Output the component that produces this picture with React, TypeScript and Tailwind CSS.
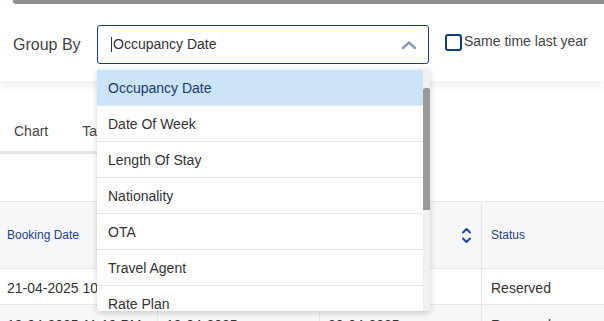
import React from "react";

const font = { fontFamily: '"Liberation Sans", Arial, sans-serif' };

function SortIcon() {
  return (
    <svg width="9" height="17" viewBox="0 0 9 17" fill="none" stroke="#1c4aa0" strokeWidth="2" strokeLinecap="round" strokeLinejoin="round">
      <polyline points="1,5.5 4.5,2 8,5.5" />
      <polyline points="1,11.5 4.5,15 8,11.5" />
    </svg>
  );
}

const items = [
  "Occupancy Date",
  "Date Of Week",
  "Length Of Stay",
  "Nationality",
  "OTA",
  "Travel Agent",
  "Rate Plan",
  "Room Type",
];

export default function App() {
  return (
    <div className="relative w-[604px] h-[321px] overflow-hidden bg-white text-[#333]" style={font}>
      {/* top bar */}
      <div className="ml-[13px] h-[4px] bg-[#8f8f8f] rounded-bl-[3px]" />

      {/* filter panel */}
      <div className="relative z-10 h-[77px] bg-white shadow-[0_5px_10px_rgba(0,0,0,0.06)] flex items-start pt-[21px] pl-[13px]">
        <div className="w-[84px] h-[39px] flex items-center text-[16px] text-[#444]">Group By</div>
        <div className="w-[332px] h-[39px] border border-[#1b3f7a] rounded-[3px] flex items-center pl-[13px] pr-[11px]">
          <span className="w-px h-[15px] bg-[#333] mr-[1px]" />
          <span className="text-[14px] text-[#333] flex-1">Occupancy Date</span>
          <svg width="16" height="10" viewBox="0 0 16 10" fill="none" stroke="#8b9bb0" strokeWidth="2.4" strokeLinecap="round" strokeLinejoin="round">
            <polyline points="2,8 8,2.5 14,8" />
          </svg>
        </div>
        <div className="ml-[16px] mt-[9px] flex items-start">
          <span className="w-[17px] h-[17px] border-2 border-[#0e3c82] rounded-[3px]" />
          <span className="ml-[2px] text-[14px] leading-[15px] text-[#444]">Same time last year</span>
        </div>
      </div>

      {/* tabs */}
      <div className="mt-[16px] w-[260px] h-[57px] border-b-[3px] border-[#e6e6e6] flex items-center pl-[14px] pt-[14px] text-[14px] text-[#444]">
        <span>Chart</span>
        <span className="ml-[34px]">Table</span>
      </div>

      {/* table */}
      <div className="mt-[47px] border-t border-[#e4e7ec]">
        <div className="grid grid-cols-[158px_162px_162px_1fr] h-[67px] bg-[#f6f7f9] border-b border-[#e4e7ec] text-[12px] text-[#1b3f8a]">
          <div className="flex items-center justify-between pl-[7px] pr-[10px] border-r border-[#e4e7ec]">
            <span>Booking Date</span>
            <SortIcon />
          </div>
          <div className="flex items-center justify-between pl-[7px] pr-[10px] border-r border-[#e4e7ec]">
            <span>Check In</span>
            <SortIcon />
          </div>
          <div className="flex items-center justify-between pl-[7px] pr-[10px] border-r border-[#e4e7ec]">
            <span>Check Out</span>
            <SortIcon />
          </div>
          <div className="flex items-center pl-[9px]">
            <span>Status</span>
          </div>
        </div>
        <div className="grid grid-cols-[158px_162px_162px_1fr] h-[36px] bg-white border-b border-[#e4e7ec] text-[14px] text-[#333]">
          <div className="flex items-center pt-[3px] pl-[7px] border-r border-[#e4e7ec] whitespace-nowrap overflow-hidden">21-04-2025 10:32 AM</div>
          <div className="flex items-center pt-[3px] pl-[8px] border-r border-[#e4e7ec]">21-04-2025</div>
          <div className="flex items-center pt-[3px] pl-[8px] border-r border-[#e4e7ec]">22-04-2025</div>
          <div className="flex items-center pt-[3px] pl-[9px]">Reserved</div>
        </div>
        <div className="grid grid-cols-[158px_162px_162px_1fr] h-[36px] bg-[#f6f7f9] border-b border-[#e4e7ec] text-[14px] text-[#333]">
          <div className="flex items-center pt-[6px] pl-[7px] border-r border-[#e4e7ec] whitespace-nowrap overflow-hidden">19-04-2025 11:19 PM</div>
          <div className="flex items-center pt-[6px] pl-[8px] border-r border-[#e4e7ec]">19-04-2025</div>
          <div className="flex items-center pt-[6px] pl-[8px] border-r border-[#e4e7ec]">20-04-2025</div>
          <div className="flex items-center pt-[6px] pl-[9px]">Reserved</div>
        </div>
      </div>

      {/* dropdown menu */}
      <div className="absolute z-20 left-[97px] top-[69px] w-[333px] h-[242px] bg-white border-t border-[#eef2f6] rounded-b-[3px] shadow-[0_2px_6px_rgba(0,0,0,0.18)] overflow-hidden flex">
        <div className="flex-1 flex flex-col">
          {items.map((it, i) => (
            <div
              key={it}
              className={
                i === 0
                  ? "h-[36px] shrink-0 flex items-center pt-[2px] pl-[11px] text-[14px] bg-[#cae4f8] text-[#1b3a6e] border-b border-[#e6e6e6]"
                  : "h-[36px] shrink-0 flex items-center pt-[2px] pl-[11px] text-[14px] text-[#333] border-b border-[#e6e6e6]"
              }
            >
              {it}
            </div>
          ))}
        </div>
        <div className="w-[7px] h-full bg-[#f0f0f0] relative">
          <div className="absolute left-0 top-[18px] w-[7px] h-[122px] bg-[#9a9a9a] rounded-t-[2px]" />
        </div>
      </div>
    </div>
  );
}
